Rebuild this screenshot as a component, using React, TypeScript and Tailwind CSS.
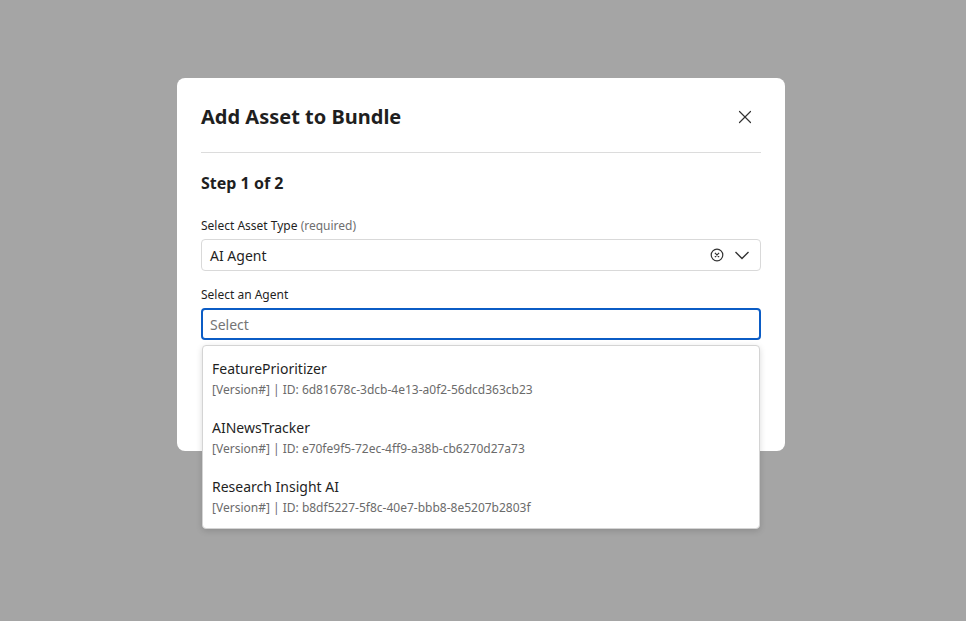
import { X } from 'lucide-react';

const AGENTS = [
  { name: 'FeaturePrioritizer', id: '6d81678c-3dcb-4e13-a0f2-56dcd363cb23' },
  { name: 'AINewsTracker', id: 'e70fe9f5-72ec-4ff9-a38b-cb6270d27a73' },
  { name: 'Research Insight AI', id: 'b8df5227-5f8c-40e7-bbb8-8e5207b2803f' },
];

function ClearIcon() {
  return (
    <svg width="14" height="14" viewBox="0 0 14 14" fill="none" stroke="#333" strokeWidth="1.2" aria-hidden="true">
      <circle cx="7" cy="7" r="5.8" />
      <path d="M4.9 4.9l4.2 4.2M9.1 4.9l-4.2 4.2" />
    </svg>
  );
}

function Chevron() {
  return (
    <svg width="16" height="10" viewBox="0 0 16 10" fill="none" stroke="#333" strokeWidth="1.4" aria-hidden="true">
      <path d="M1.5 2l6.5 6.5L14.5 2" />
    </svg>
  );
}

export default function App() {
  return (
    <div className="min-h-[621px] w-full bg-[#a5a5a5] pt-[78px] font-['Noto_Sans',sans-serif] text-[#1f1f1f]">
      <div className="ml-[177px] w-[608px] rounded-lg bg-white px-6 pt-6 pb-[111px]">
        <div className="flex items-center justify-between border-b border-[#dcdcdc] pb-5">
          <h1 className="text-[20px] leading-[30px] font-bold">Add Asset to Bundle</h1>
          <button type="button" className="mr-[5px] text-[#333]" aria-label="Close">
            <X size={22} strokeWidth={1.3} />
          </button>
        </div>

        <h2 className="mt-[18px] text-[16px] leading-6 font-bold">Step 1 of 2</h2>

        <label className="mt-[22px] block text-[12px] leading-[18px]">
          Select Asset Type <span className="text-[#6f6f6f]">(required)</span>
        </label>
        <div className="mt-1 flex h-[32px] items-center rounded border border-[#d9d9d9] pr-[10px] pl-2">
          <span className="flex-1 text-[14px]">AI Agent</span>
          <ClearIcon />
          <span className="ml-[10px] flex">
            <Chevron />
          </span>
        </div>

        <label className="mt-[15px] block text-[12px] leading-[18px]">Select an Agent</label>
        <div className="relative mt-1">
          <div className="flex h-[32px] items-center rounded border-2 border-[#0b5cc5] pl-[7px] text-[14px] text-[#757575]">
            Select
          </div>
          <ul className="absolute top-[37px] right-[1px] left-[1px] z-10 rounded border border-[#d4d4d4] bg-white pt-[3px] pb-[2px] shadow-[0_2px_6px_rgba(0,0,0,0.15)]">
            {AGENTS.map((agent) => (
              <li key={agent.id} className="px-[9px] pt-[10px] pb-[9px]">
                <div className="text-[14px] leading-5 text-[#1f1f1f]">{agent.name}</div>
                <div className="mt-[2px] text-[12px] leading-[18px] text-[#6b6b6b]">
                  [Version#] | ID: {agent.id}
                </div>
              </li>
            ))}
          </ul>
        </div>
      </div>
    </div>
  );
}
